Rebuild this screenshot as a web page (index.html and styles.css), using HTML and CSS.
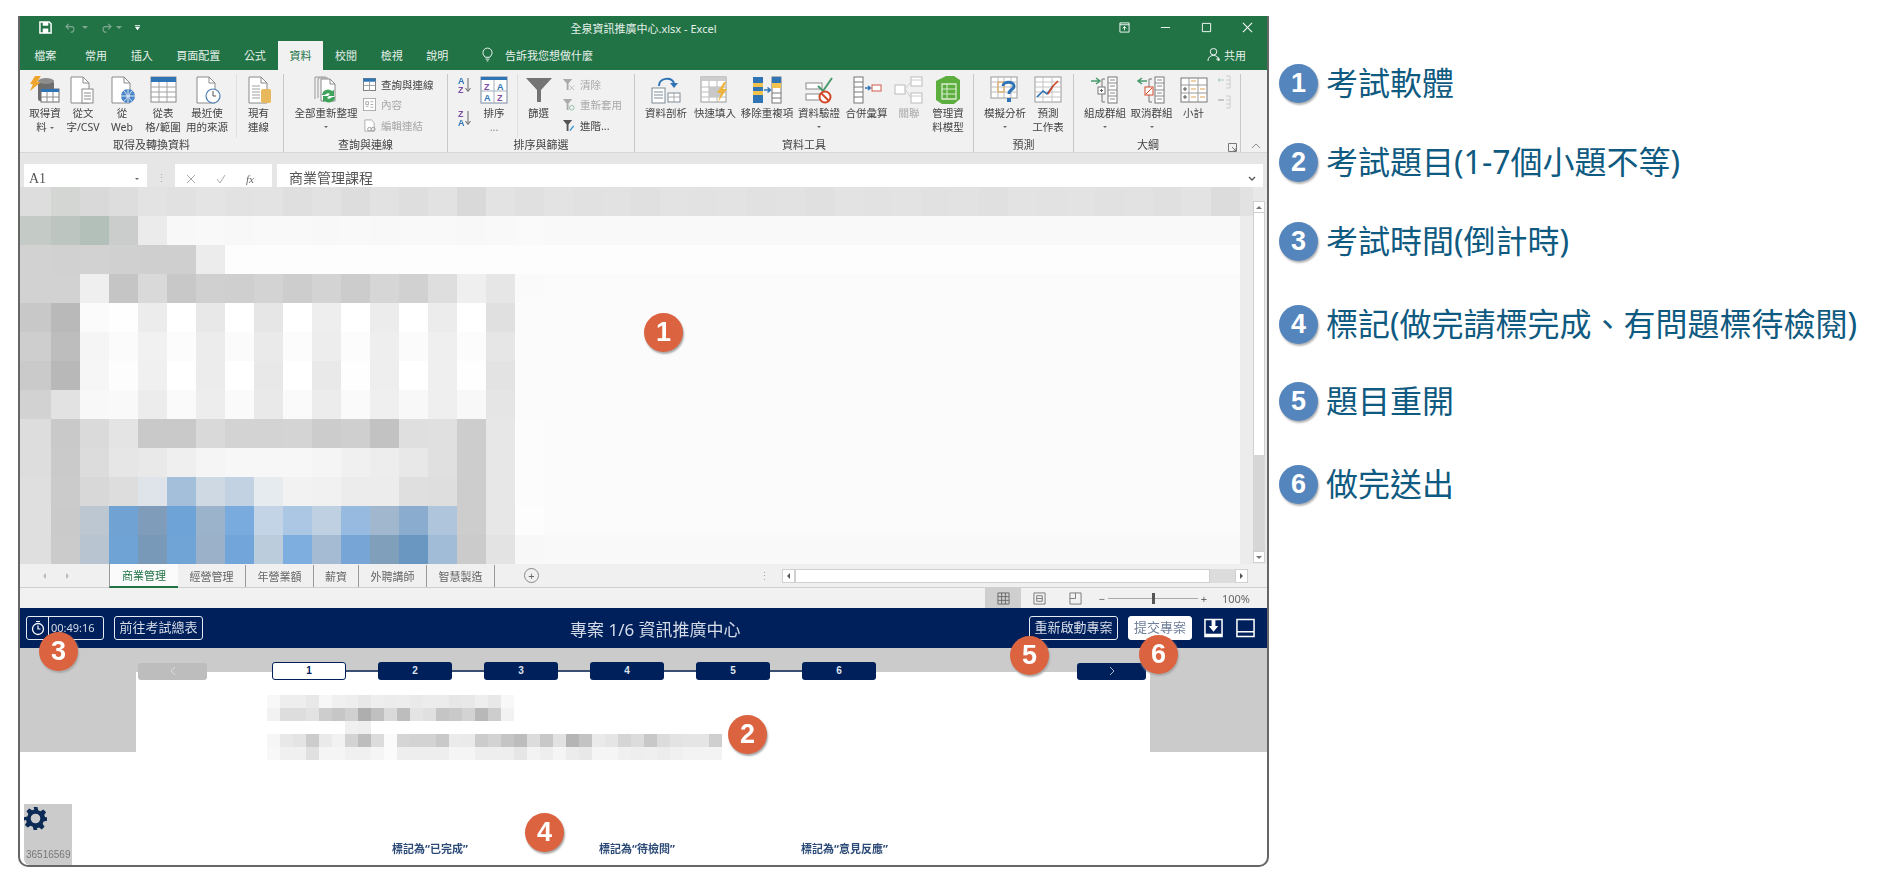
FILE: index.html

```html
<!DOCTYPE html>
<html lang="zh-Hant">
<head>
  <meta charset="UTF-8" />
  <meta name="viewport" content="width=device-width, initial-scale=1.0"/>
  <title>考試介面說明</title>
  <link rel="stylesheet" href="styles.css">
</head>
<body>
<div class="page">

  <div class="frame">

    <!-- excel window -->
    <div class="titlebar">
      <div class="qat">
        <svg class="q-save" viewBox="0 0 14 14"><path d="M1 1h10l2 2v10H1z" fill="none" stroke="#fff" stroke-width="1.6"/><path d="M4 1h6v4H4zM4 8h6v5H4z" fill="#fff"/></svg>
        <svg class="q-undo" viewBox="0 0 14 12"><path d="M4 2 1 5l3 3M1 5h7a3.500 3.500 0 0 1 0 6H6" fill="none" stroke="#7fa892" stroke-width="1.3"/></svg>
        <i class="q-caret"></i>
        <svg class="q-redo" viewBox="0 0 14 12"><path d="M10 2l3 3-3 3M13 5H6a3.500 3.500 0 0 0 0 6h2" fill="none" stroke="#7fa892" stroke-width="1.3"/></svg>
        <i class="q-caret"></i>
        <svg class="q-more" viewBox="0 0 8 8"><path d="M1 1h6v1H1zM1 3h6L4 7z" fill="#fff"/></svg>
      </div>
      <div class="doc-title">全泉資訊推廣中心.xlsx - Excel</div>
      <div class="winbtns">
        <svg viewBox="0 0 12 12"><path d="M1 1h10v10H1zM1 3h10" fill="none" stroke="#fff"/><path d="M6 9V5M4 7l2-2 2 2" fill="none" stroke="#fff"/></svg>
        <svg viewBox="0 0 12 12"><path d="M1 6h10" stroke="#fff"/></svg>
        <svg viewBox="0 0 12 12"><path d="M1.500 1.500h9v9h-9z" fill="none" stroke="#fff"/></svg>
        <svg viewBox="0 0 12 12"><path d="M1 1l10 10M11 1 1 11" stroke="#fff" stroke-width="1.100"/></svg>
      </div>
    </div>

    <div class="tabbar">
      <span class="tab tab-first">檔案</span>
      <span class="tab">常用</span>
      <span class="tab">插入</span>
      <span class="tab">頁面配置</span>
      <span class="tab">公式</span>
      <span class="tab active">資料</span>
      <span class="tab">校閱</span>
      <span class="tab">檢視</span>
      <span class="tab">說明</span>
      <svg class="bulb" viewBox="0 0 12 16"><path d="M3.500 11C2 9 1 8 1 6a5 5 0 0 1 10 0c0 2-1 3-2.500 5zM4 13h4M5 15h2" fill="none" stroke="#fff"/></svg>
      <span class="tell">告訴我您想做什麼</span>
      <span class="share">
        <svg viewBox="0 0 14 16"><circle cx="7" cy="5" r="3.500" fill="none" stroke="#fff"/><path d="M1 15c0-4 3-6 6-6s6 2 6 6M10 13h4M12 11v4" fill="none" stroke="#fff"/></svg>
        共用
      </span>
    </div>

    <div class="ribbon">

      <div class="group g1">
        <div class="items">
          <div class="item w38">
            <svg class="big" viewBox="0 0 30 28"><rect x="8" y="5" width="16" height="20" rx="2" fill="#6d6d6d"/><ellipse cx="16" cy="5" rx="8" ry="3" fill="#8d8d8d"/><rect x="11" y="13" width="18" height="13" fill="#fff" stroke="#6f6f6f"/><rect x="11" y="13" width="18" height="3" fill="#2f75b5"/><path d="M17 16v10M23 16v10M11 21h18" stroke="#8b8b8b"/><path d="M5 0h6L7 6h4L0 15l3-7H0z" fill="#efa42c"/></svg>
            <span>取得資<br>料<i class="caret in"></i></span>
          </div>
          <div class="item w38">
            <svg class="big" viewBox="0 0 30 28"><path d="M3 1h12l6 6v20H3z" fill="#fff" stroke="#8a8a8a"/><path d="M15 1v6h6" fill="none" stroke="#8a8a8a"/><rect x="14" y="13" width="11" height="14" fill="#fff" stroke="#8a8a8a"/><path d="M16 17h7M16 20h7M16 23h7" stroke="#8a8a8a"/></svg>
            <span>從文<br>字/CSV</span>
          </div>
          <div class="item w40">
            <svg class="big" viewBox="0 0 30 28"><path d="M5 1h12l6 6v20H5z" fill="#fff" stroke="#8a8a8a"/><path d="M17 1v6h6" fill="none" stroke="#8a8a8a"/><circle cx="21" cy="20" r="7" fill="#4a86c8"/><path d="M14 20h14M21 13v14M17 15c3 3 5 7 0 10M25 15c-3 3-5 7 0 10" fill="none" stroke="#fff" stroke-width=".8"/></svg>
            <span>從<br>Web</span>
          </div>
          <div class="item w42">
            <svg class="big" viewBox="0 0 30 28"><rect x="3" y="1" width="25" height="25" fill="#fff" stroke="#8a8a8a"/><rect x="3" y="1" width="25" height="5" fill="#2f75b5"/><path d="M3 11h25M3 16h25M3 21h25M11 6v20M19 6v20" stroke="#a0a0a0"/></svg>
            <span>從表<br>格/範圍</span>
          </div>
          <div class="item w46">
            <svg class="big" viewBox="0 0 30 28"><path d="M5 1h12l6 6v20H5z" fill="#fff" stroke="#8a8a8a"/><path d="M17 1v6h6" fill="none" stroke="#8a8a8a"/><circle cx="21" cy="20" r="7" fill="#fff" stroke="#4a7fb5" stroke-width="1.200"/><path d="M21 15v5h3" fill="none" stroke="#555"/></svg>
            <span>最近使<br>用的來源</span>
          </div>
          <div class="item w44 sep">
            <svg class="big" viewBox="0 0 30 28"><path d="M5 1h12l6 6v20H5z" fill="#fff" stroke="#8a8a8a"/><path d="M17 1v6h6" fill="none" stroke="#8a8a8a"/><path d="M8 10h8M8 13h8M8 16h8M8 19h8M8 22h8" stroke="#a0a0a0"/><rect x="17" y="13" width="10" height="14" rx="2" fill="#e9b85c"/></svg>
            <span>現有<br>連線</span>
          </div>
        </div>
        <div class="group-label">取得及轉換資料</div>
      </div>

      <div class="group g2">
        <div class="items">
          <div class="item w64">
            <svg class="big" viewBox="0 0 30 28"><path d="M4 1v22M7 2v20M4 1h11M7 2h10" fill="none" stroke="#999"/><path d="M10 3h9l5 5v17H10z" fill="#fff" stroke="#8a8a8a"/><path d="M19 3v5h5" fill="none" stroke="#8a8a8a"/><path d="M11 19a6 6 0 0 1 10-4l2-1v6h-6l2-2a3.500 3.500 0 0 0-5 1zM24 21a6 6 0 0 1-10 4l-2 1v-6h6l-2 2a3.500 3.500 0 0 0 5-1z" fill="#3fa35c"/></svg>
            <span>全部重新整理</span>
            <i class="caret"></i>
          </div>
          <div class="smalls s2">
            <div class="small">
              <svg viewBox="0 0 14 14"><rect x=".5" y=".5" width="13" height="13" fill="#fff" stroke="#777"/><rect x=".5" y=".5" width="13" height="3.500" fill="#2f75b5"/><path d="M.5 8h13M7 4v10" stroke="#999"/></svg>
              <span>查詢與連線</span>
            </div>
            <div class="small off">
              <svg viewBox="0 0 14 14"><rect x=".5" y=".5" width="13" height="13" fill="#fff" stroke="#aaa"/><path d="M3 4h3v3H3zM3 9h3M8 4h3M8 7h3M8 10h3" fill="none" stroke="#aaa"/></svg>
              <span>內容</span>
            </div>
            <div class="small off">
              <svg viewBox="0 0 14 14"><path d="M2 1h7l3 3v9H2z" fill="#fff" stroke="#aaa"/><circle cx="7" cy="11" r="2" fill="none" stroke="#999"/><circle cx="11" cy="11" r="2" fill="none" stroke="#999"/></svg>
              <span>編輯連結</span>
            </div>
          </div>
        </div>
        <div class="group-label">查詢與連線</div>
      </div>

      <div class="group g3">
        <div class="items">
          <div class="sorts">
            <svg viewBox="0 0 18 20"><text x="0" y="9" class="az a">A</text><text x="0" y="18" class="az z">Z</text><path d="M10 3v13M7.500 13l2.500 3.500 2.500-3.500" fill="none" stroke="#666"/></svg>
            <svg viewBox="0 0 18 20"><text x="0" y="9" class="az z">Z</text><text x="0" y="18" class="az a">A</text><path d="M10 3v13M7.500 13l2.500 3.500 2.500-3.500" fill="none" stroke="#666"/></svg>
          </div>
          <div class="item w36">
            <svg class="big" viewBox="0 0 30 28"><rect x="2" y="1" width="26" height="26" fill="#fff" stroke="#7b8ca0"/><rect x="2" y="1" width="26" height="3" fill="#2f75b5"/><path d="M15 4v23M2 15h26" stroke="#a4afbc"/><text x="5" y="14" class="az z">Z</text><text x="18" y="14" class="az a">A</text><text x="5" y="25" class="az a">A</text><text x="18" y="25" class="az z">Z</text></svg>
            <span>排序<br><b class="dots">...</b></span>
          </div>
          <div class="item w42 sep-s">
            <svg class="big" viewBox="0 0 30 28"><path d="M2 2h26L17 14v12h-4V14z" fill="#747474"/></svg>
            <span>篩選</span>
          </div>
          <div class="smalls s3">
            <div class="small off">
              <svg viewBox="0 0 14 14"><path d="M1 1h10L7 6v7H5V6z" fill="#aaa"/><path d="M8 8l5 5M13 8l-5 5" stroke="#bbb"/></svg>
              <span>清除</span>
            </div>
            <div class="small off">
              <svg viewBox="0 0 14 14"><path d="M1 1h10L7 6v7H5V6z" fill="#aaa"/><circle cx="10.500" cy="10.500" r="2.500" fill="none" stroke="#8fc0a4"/></svg>
              <span>重新套用</span>
            </div>
            <div class="small">
              <svg viewBox="0 0 14 14"><path d="M1 1h10L7 6v7H5V6z" fill="#555"/><path d="M8 12l4-5 1 1-4 5z" fill="#2f8fd0"/></svg>
              <span>進階...</span>
            </div>
          </div>
        </div>
        <div class="group-label">排序與篩選</div>
      </div>

      <div class="group g4">
        <div class="items">
          <div class="item w48">
            <svg class="big" viewBox="0 0 30 28"><rect x="1" y="12" width="13" height="15" fill="#fff" stroke="#7e8b98"/><path d="M3 16h9M3 19h9M3 22h9" stroke="#7e8b98"/><rect x="17" y="17" width="12" height="9" fill="#fff" stroke="#7e8b98"/><path d="M17 21h12M23 17v9" stroke="#aaa"/><path d="M8 10C8 2 20 0 23 7" fill="none" stroke="#2f75b5" stroke-width="2"/><path d="M19 7h8l-4 5z" fill="#2f75b5"/></svg>
            <span>資料剖析</span>
          </div>
          <div class="item w50">
            <svg class="big" viewBox="0 0 30 28"><rect x="1" y="1" width="25" height="25" fill="#fff" stroke="#999"/><rect x="1" y="1" width="25" height="4" fill="#ccc"/><path d="M1 11h25M1 16h25M1 21h25M9 5v21M17 5v21" stroke="#bbb"/><rect x="9" y="11" width="13" height="10" fill="#c8c8c8"/><path d="M24 6l-7 11h4l-3 9 9-13h-4l3-7z" fill="#efb43c"/></svg>
            <span>快速填入</span>
          </div>
          <div class="item w54">
            <svg class="big" viewBox="0 0 30 28"><rect x="1" y="1" width="10" height="26" fill="#2f75b5"/><rect x="1" y="7" width="10" height="4" fill="#f2c14e"/><rect x="1" y="15" width="10" height="4" fill="#f2c14e"/><rect x="20" y="1" width="9" height="26" fill="#fff" stroke="#777"/><rect x="20" y="1" width="9" height="6" fill="#2f75b5"/><rect x="20" y="7" width="9" height="5" fill="#f2c14e"/><path d="M20 17h9M20 22h9" stroke="#777"/><path d="M12 14h6M15.500 11.500l3 2.500-3 2.500" fill="none" stroke="#2f75b5" stroke-width="1.500"/></svg>
            <span>移除重複項</span>
          </div>
          <div class="item w50">
            <svg class="big" viewBox="0 0 30 28"><rect x="2" y="7" width="16" height="6" fill="#fff" stroke="#8a8a8a"/><rect x="2" y="18" width="16" height="6" fill="#fff" stroke="#8a8a8a"/><path d="M14 10l5 5L28 2" fill="none" stroke="#4a9a6f" stroke-width="2"/><circle cx="21" cy="21" r="5.500" fill="#fff" stroke="#d2492a" stroke-width="2"/><path d="M17.500 17.500l7 7" stroke="#d2492a" stroke-width="2"/></svg>
            <span>資料驗證</span>
            <i class="caret"></i>
          </div>
          <div class="item w45">
            <svg class="big" viewBox="0 0 30 28"><rect x="2" y="1" width="9" height="26" fill="#fff" stroke="#777"/><path d="M2 6h9M2 11h9M2 16h9M2 21h9" stroke="#777"/><path d="M13 12h5M16 10l2.500 2-2.500 2" fill="none" stroke="#2f75b5" stroke-width="1.400"/><rect x="20" y="9" width="9" height="6" fill="#fff" stroke="#d05a4a"/></svg>
            <span>合併彙算</span>
          </div>
          <div class="item w40 off">
            <svg class="big" viewBox="0 0 30 28"><rect x="1" y="9" width="10" height="9" fill="#fff" stroke="#bbb"/><rect x="17" y="1" width="11" height="9" fill="#fff" stroke="#bbb"/><rect x="17" y="17" width="11" height="10" fill="#fff" stroke="#bbb"/><path d="M11 13l6-7M11 13l6 9M17 4h11M17 20h11" stroke="#ccc" fill="none"/></svg>
            <span>關聯</span>
          </div>
          <div class="item w38">
            <svg class="big" viewBox="0 0 30 28"><path d="M3 5 13 0h8l6 4v19l-6 5H9l-6-4z" fill="#5cae3f"/><path d="M9 8h14v15H9z" fill="none" stroke="#d9edcf" stroke-width="1.300"/><path d="M14 8v15M9 13h14M9 18h14" stroke="#d9edcf"/></svg>
            <span>管理資<br>料模型</span>
          </div>
        </div>
        <div class="group-label">資料工具</div>
      </div>

      <div class="group g5">
        <div class="items">
          <div class="item w44">
            <svg class="big" viewBox="0 0 30 28"><rect x="1" y="1" width="26" height="21" fill="#fff" stroke="#999"/><path d="M1 6h26M1 11h26M1 16h26M8 1v21M14 1v21M21 1v21" stroke="#bbb"/><path d="M8 6h6v10H8z" fill="none" stroke="#e6a24e"/><path d="M13 10c0-5 11-5 11 0 0 4-5 3-5 8" fill="none" stroke="#2f75b5" stroke-width="3"/><rect x="17" y="22" width="4" height="4" fill="#2f75b5"/></svg>
            <span>模擬分析</span>
            <i class="caret"></i>
          </div>
          <div class="item w42">
            <svg class="big" viewBox="0 0 30 28"><rect x="2" y="1" width="26" height="25" fill="#fff" stroke="#999"/><path d="M2 6h26M2 11h26M2 16h26M2 21h26M10 1v25M19 1v25" stroke="#c4c4c4"/><path d="M4 21l6-6 4 3 6-8" fill="none" stroke="#2f75b5" stroke-width="1.600"/><path d="M15 18l5-8 5-5" fill="none" stroke="#d2492a" stroke-width="1.600"/></svg>
            <span>預測<br>工作表</span>
          </div>
        </div>
        <div class="group-label">預測</div>
      </div>

      <div class="group g6">
        <div class="items">
          <div class="item w48">
            <svg class="big" viewBox="0 0 30 28"><path d="M1 5h8M6 2l4 3-4 3" fill="none" stroke="#4a9a6f" stroke-width="1.500"/><path d="M15 3h-3v23h3" fill="none" stroke="#777"/><rect x="8" y="11" width="7" height="7" fill="#fff" stroke="#777"/><path d="M10 14.500h3M11.500 13v3" stroke="#555"/><rect x="18" y="1" width="9" height="26" fill="#fff" stroke="#777"/><path d="M18 7h9M18 14h9M18 20h9M20 4h5M20 10h5M20 17h5M20 23h5" stroke="#8a8a8a"/></svg>
            <span>組成群組</span>
            <i class="caret"></i>
          </div>
          <div class="item w45">
            <svg class="big" viewBox="0 0 30 28"><path d="M10 5H2M5 2 1 5l4 3" fill="none" stroke="#4a9a6f" stroke-width="1.500"/><path d="M15 3h-3v23h3" fill="none" stroke="#777"/><rect x="8" y="11" width="8" height="8" fill="#fff" stroke="#d2492a"/><path d="M9 18l6-6" stroke="#d2492a"/><rect x="18" y="1" width="9" height="26" fill="#fff" stroke="#777"/><path d="M18 7h9M18 14h9M18 20h9M20 4h5M20 10h5M20 17h5M20 23h5" stroke="#8a8a8a"/></svg>
            <span>取消群組</span>
            <i class="caret"></i>
          </div>
          <div class="item w39">
            <svg class="big" viewBox="0 0 30 28"><rect x="2" y="2" width="26" height="24" fill="#fff" stroke="#777"/><path d="M2 9h26M2 17h26M10 2v24M19 2v24" stroke="#999"/><path d="M4 13h4M6 11v4M4 21h4M6 19v4" stroke="#555"/><path d="M12 5h5M12 13h5M21 13h5M12 21h5M21 21h5" stroke="#e0a050"/></svg>
            <span>小計</span>
          </div>
          <div class="outline-mini">
            <svg viewBox="0 0 14 14"><path d="M1 5h6M3 3 1 5l2 2" fill="none" stroke="#a8cdb8"/><path d="M9 1h4v12H9M9 5h4M9 9h4" fill="none" stroke="#ccc"/></svg>
            <svg viewBox="0 0 14 14"><path d="M1 5h6" stroke="#999"/><path d="M9 1h4v12H9M9 5h4M9 9h4" fill="none" stroke="#ccc"/></svg>
          </div>
        </div>
        <div class="group-label">大綱</div>
        <svg class="launcher" viewBox="0 0 9 9"><path d="M.5.5h8v8h-8zM4 4l4 4M8 5v3H5" fill="none" stroke="#777"/></svg>
      </div>

      <svg class="collapse" viewBox="0 0 12 7"><path d="M1 6l5-5 5 5" fill="none" stroke="#777"/></svg>
    </div>

    <div class="formula">
      <div class="namebox"><span>A1</span><i class="caret"></i></div>
      <div class="fdots">⋮</div>
      <div class="fxbox">
        <svg viewBox="0 0 10 10"><path d="M1 1l8 8M9 1 1 9" stroke="#aaa"/></svg>
        <svg viewBox="0 0 10 10"><path d="M1 5l3 4 5-8" fill="none" stroke="#aaa"/></svg>
        <em>fx</em>
      </div>
      <div class="finput"><span>商業管理課程</span><svg viewBox="0 0 8 5"><path d="M1 1l3 3 3-3" fill="none" stroke="#555" stroke-width="1.300"/></svg></div>
    </div>

    <div class="sheet">
      <div class="mosaic" id="mosaic"></div>
      <div class="vscroll">
        <div class="sb-btn"><i class="up"></i></div>
        <div class="sb-thumb"></div>
        <div class="sb-track"></div>
        <div class="sb-btn"><i class="down"></i></div>
      </div>
    </div>

    <div class="sheetbar">
      <div class="navs"><i class="nav-l"></i><i class="nav-r"></i></div>
      <span class="stab current w69">商業管理</span>
      <span class="stab w68">經營管理</span>
      <span class="stab w68">年營業額</span>
      <span class="stab w45t">薪資</span>
      <span class="stab w68">外聘講師</span>
      <span class="stab w68">智慧製造</span>
      <span class="addsheet">+</span>
      <div class="hscroll">
        <span class="hdots">⋮</span>
        <div class="h-btn"><i class="nav-l dark"></i></div>
        <div class="h-thumb"></div>
        <div class="h-track"></div>
        <div class="h-btn"><i class="nav-r dark"></i></div>
      </div>
    </div>

    <div class="statusbar">
      <div class="view on"><svg viewBox="0 0 14 14"><path d="M1 1h12v12H1zM1 5h12M1 9h12M5 1v12M9 1v12" fill="none" stroke="#666"/></svg></div>
      <div class="view"><svg viewBox="0 0 14 14"><path d="M1 1h12v12H1zM4 4h6v6H4zM4 7h6" fill="none" stroke="#777"/></svg></div>
      <div class="view"><svg viewBox="0 0 14 14"><path d="M1 1h12v12H1zM7 1v6H1" fill="none" stroke="#777"/></svg></div>
      <div class="zoom">
        <span>−</span>
        <div class="slider"><i></i></div>
        <span>+</span>
      </div>
      <span class="pct">100%</span>
    </div>

    <!-- exam panel -->
    <div class="exam-head">
      <div class="timer">
        <span class="clock"><svg viewBox="0 0 14 16"><circle cx="7" cy="9" r="5.500" fill="none" stroke="#fff" stroke-width="1.300"/><path d="M7 5.500V9h2.500M5 1.500h4" fill="none" stroke="#fff" stroke-width="1.200"/></svg></span>
        <span class="time">00:49:16</span>
      </div>
      <div class="hbtn summary">前往考試總表</div>
      <div class="exam-title">專案 1/6 資訊推廣中心</div>
      <div class="head-right">
        <div class="hbtn restart">重新啟動專案</div>
        <div class="hbtn submit">提交專案</div>
        <svg class="hicon" viewBox="0 0 20 20"><path d="M1 1h18v18H1z" fill="none" stroke="#fff" stroke-width="1.600"/><path d="M8 1h4v7h3l-5 6-5-6h3z" fill="#fff"/><path d="M1 16h18v3H1z" fill="#fff"/></svg>
        <svg class="hicon" viewBox="0 0 20 20"><path d="M1 1h18v18H1zM1 14h18" fill="none" stroke="#fff" stroke-width="1.600"/></svg>
      </div>
    </div>

    <div class="stage">
      <div class="side"></div>
      <div class="question">
        <div class="steps">
          <div class="arrow prev"><svg viewBox="0 0 6 10"><path d="M5 1 1 5l4 4" fill="none" stroke="#ddd"/></svg></div>
          <div class="step first">1</div>
          <i class="link"></i>
          <div class="step">2</div>
          <i class="link"></i>
          <div class="step">3</div>
          <i class="link"></i>
          <div class="step">4</div>
          <i class="link"></i>
          <div class="step">5</div>
          <i class="link"></i>
          <div class="step">6</div>
          <div class="arrow next"><svg viewBox="0 0 6 10"><path d="M1 1l4 4-4 4" fill="none" stroke="#aab6ca"/></svg></div>
        </div>
        <div class="blurred" id="blurred"></div>
      </div>
      <div class="side"></div>
    </div>

    <div class="foot">
      <div class="gearbox">
        <svg viewBox="0 0 24 24"><path d="M10 0h4l.8 3.500 2.400 1 3-1.900 2.800 2.800-1.900 3 1 2.400L24 10.600v3.800l-3.500.8-1 2.400 1.900 3-2.800 2.800-3-1.900-2.400 1L14 24h-4l-.8-3.400-2.400-1-3 1.900-2.800-2.800 1.900-3-1-2.400L0 14.400v-3.800l3.500-.8 1-2.400-1.900-3 2.800-2.800 3 1.900 2.400-1zM12 7a5 5 0 1 0 0 10 5 5 0 0 0 0-10z" fill="#0b2a55" fill-rule="evenodd"/></svg>
        <span>36516569</span>
      </div>
      <div class="marks">
        <span>標記為“已完成”</span>
        <span>標記為“待檢閱”</span>
        <span>標記為“意見反應”</span>
      </div>
    </div>
  </div>

  <!-- numbered legend -->
  <ol class="legend">
    <li><b>1</b><span>考試軟體</span></li>
    <li><b>2</b><span>考試題目(1-7個小題不等)</span></li>
    <li><b>3</b><span>考試時間(倒計時)</span></li>
    <li><b>4</b><span>標記(做完請標完成、有問題標待檢閱)</span></li>
    <li><b>5</b><span>題目重開</span></li>
    <li><b>6</b><span>做完送出</span></li>
  </ol>

  <span class="badge b1">1</span>
  <span class="badge b2">2</span>
  <span class="badge b3">3</span>
  <span class="badge b4">4</span>
  <span class="badge b5">5</span>
  <span class="badge b6">6</span>
</div>
<script src="mosaic.js"></script>
</body>
</html>
```

FILE: styles.css

```css
* {
  box-sizing: border-box;
}
html, body {
  margin: 0;
  height: 100%;
  overflow: hidden;
  background: #fff;
}
body {
  font-family: "Noto Sans", "Noto Sans CJK TC", sans-serif;
  font-size: 11px;
  color: #444;
}
svg {
  display: block;
}
.page {
  position: relative;
  display: flex;
  align-items: flex-start;
  width: 1884px;
  height: 886px;
  padding: 16px 0 0 18px;
}
.frame {
  flex: none;
  width: 1251px;
  height: 851px;
  border: 2px solid #666;
  border-top: 0;
  border-radius: 0 0 10px 10px;
  filter: blur(.35px);
}

/* title + tabs */
.titlebar {
  display: grid;
  grid-template-columns: 1fr auto 1fr;
  align-items: center;
  height: 25px;
  padding-bottom: 2px;
  background: #217346;
  color: #e6f0ea;
}
.qat {
  display: flex;
  align-items: center;
  padding-left: 19px;
}
.q-save {
  width: 13px;
  height: 13px;
}
.q-undo, .q-redo {
  width: 13px;
  height: 11px;
}
.q-undo {
  margin-left: 13px;
}
.q-redo {
  margin-left: 11px;
}
.q-caret {
  width: 0;
  height: 0;
  margin-left: 4px;
  border: 3px solid transparent;
  border-top-color: #7fa892;
  border-bottom: 0;
}
.q-more {
  width: 7px;
  height: 7px;
  margin-left: 12px;
}
.doc-title {
  font-size: 11px;
  white-space: nowrap;
}
.winbtns {
  display: flex;
  justify-content: flex-end;
  align-items: center;
  gap: 30px;
  padding-right: 14px;
}
.winbtns svg {
  width: 11px;
  height: 11px;
}
.tabbar {
  display: flex;
  align-items: center;
  height: 29px;
  padding-left: 2.500px;
  background: #217346;
  color: #e6f0ea;
}
.tab {
  display: flex;
  align-items: center;
  height: 100%;
  padding: 0 11.800px 2px;
  white-space: nowrap;
}
.tab-first {
  padding-right: 17px;
}
.tab.active {
  background: #f1f1f1;
  color: #217346;
}
.bulb {
  width: 11px;
  height: 15px;
  margin: 0 0 2px 22px;
}
.tell {
  margin: 0 0 2px 12px;
}
.share {
  display: flex;
  align-items: center;
  gap: 4px;
  margin: 0 0 2px auto;
  padding-right: 21px;
}
.share svg {
  width: 13px;
  height: 15px;
}

/* ribbon */
.ribbon {
  position: relative;
  display: flex;
  height: 83px;
  padding-top: 4px;
  background: #f1f1f1;
  border-bottom: 1px solid #d6d6d6;
}
.group {
  position: relative;
  display: flex;
  flex-direction: column;
  flex: none;
  height: 78px;
  border-right: 1px solid #c8c8c8;
}
.g1 { width: 264px; padding-left: 6px; }
.g2 { width: 164px; padding-left: 10px; }
.g3 { width: 187px; padding-left: 10px; }
.g4 { width: 339px; padding-left: 7px; }
.g5 { width: 100px; padding-left: 9px; }
.g6 { width: 167px; padding-left: 7px; }
.items {
  display: flex;
  height: 65px;
}
.group-label {
  margin-left: -10px;
  height: 14px;
  line-height: 14px;
  text-align: center;
  font-size: 11px;
}
.g1 .group-label { margin-left: -6px; }
.g4 .group-label { margin-left: -7px; }
.g5 .group-label { margin-left: -9px; }
.g6 .group-label { margin-left: -7px; padding-right: 18px; }
.item {
  display: flex;
  flex-direction: column;
  align-items: center;
  flex: none;
  padding-top: 2px;
  line-height: 14px;
  font-size: 10.500px;
  text-align: center;
  white-space: nowrap;
}
.item .big {
  width: 30px;
  height: 28px;
  margin-bottom: 2px;
}
.off, .off span {
  color: #a8a8a8;
}
.w36 { width: 36px; }
.w38 { width: 38px; }
.w39 { width: 39px; }
.w40 { width: 40px; }
.w42 { width: 42px; }
.w44 { width: 44px; }
.w45 { width: 45px; }
.w46 { width: 46px; }
.w48 { width: 48px; }
.w50 { width: 50px; }
.w54 { width: 54px; }
.w64 { width: 64px; }
.sep {
  margin-left: 6px;
  border-left: 1px solid #e0e0e0;
}
.sep-s {
  margin-left: 5px;
  border-left: 1px solid #e0e0e0;
}
.caret {
  display: block;
  width: 0;
  height: 0;
  margin: 6px auto 0;
  border: 2.500px solid transparent;
  border-top-color: #666;
  border-bottom: 0;
}
.caret.in {
  display: inline-block;
  margin: 0 0 2px 3px;
}
.smalls {
  display: flex;
  flex-direction: column;
}
.s2 { margin-left: 5px; }
.s3 { margin-left: 3px; }
.small {
  display: flex;
  align-items: center;
  gap: 5px;
  height: 20.500px;
  white-space: nowrap;
  font-size: 10.500px;
}
.small svg {
  width: 13px;
  height: 13px;
}
.sorts {
  display: flex;
  flex-direction: column;
  gap: 13px;
  padding-top: 1px;
}
.sorts svg {
  width: 18px;
  height: 20px;
}
.az {
  font: bold 9px "Liberation Sans", sans-serif;
}
.az.a { fill: #2f75b5; }
.az.z { fill: #7d4fa8; }
.dots {
  font-weight: normal;
  color: #888;
}
.outline-mini {
  display: flex;
  flex-direction: column;
  gap: 6px;
  padding: 1px 0 0 4px;
}
.outline-mini svg {
  width: 14px;
  height: 14px;
}
.launcher {
  position: absolute;
  right: 3px;
  bottom: 0;
  width: 9px;
  height: 9px;
}
.collapse {
  position: absolute;
  right: 6px;
  bottom: 3px;
  width: 10px;
  height: 6px;
}

/* formula bar */
.formula {
  display: flex;
  height: 34px;
  padding-top: 11px;
  background: #e6e6e6;
  overflow: hidden;
}
.namebox {
  display: flex;
  align-items: center;
  justify-content: space-between;
  width: 123px;
  height: 23px;
  margin-left: 4px;
  padding: 6px 8px 0 5px;
  background: #fff;
  font: 14px "Liberation Serif", serif;
  color: #555;
}
.namebox .caret {
  margin: 0;
}
.fdots {
  width: 28px;
  text-align: center;
  color: #aaa;
  line-height: 28px;
}
.fxbox {
  display: flex;
  align-items: center;
  gap: 20px;
  width: 97px;
  height: 23px;
  padding: 6px 0 0 11px;
  background: #fff;
}
.fxbox svg {
  width: 10px;
  height: 10px;
}
.fxbox em {
  font: italic 11px "Liberation Serif", serif;
  color: #666;
}
.finput {
  display: flex;
  align-items: center;
  justify-content: space-between;
  width: 986px;
  height: 23px;
  margin-left: 5px;
  padding: 5px 7px 0 12px;
  background: #fff;
  font-size: 14px;
  line-height: 18px;
  color: #555;
}
.finput svg {
  width: 8px;
  height: 5px;
}

/* blurred sheet */
.sheet {
  display: flex;
  height: 377px;
}
.mosaic {
  display: grid;
  grid-template-columns: 31px repeat(41, 29px) 13px;
  grid-auto-rows: 29px;
  width: 1233px;
}
.mosaic i, .blurred i {
  display: block;
}
.vscroll {
  display: flex;
  flex-direction: column;
  width: 14px;
  padding: 14px 2px 1px 0;
  background: #e8e8e8;
}
.sb-btn {
  display: flex;
  align-items: center;
  justify-content: center;
  height: 12px;
  background: #fff;
  border: 1px solid #d0d0d0;
}
.up, .down {
  width: 0;
  height: 0;
  border: 3.500px solid transparent;
}
.up {
  border-bottom-color: #777;
  border-top: 0;
}
.down {
  border-top-color: #777;
  border-bottom: 0;
}
.sb-thumb {
  height: 242px;
  background: #fff;
  border-left: 1px solid #d0d0d0;
  border-right: 1px solid #d0d0d0;
}
.sb-track {
  flex: 1;
  background: #d6d6d6;
}

/* sheet tabs */
.sheetbar {
  display: flex;
  align-items: center;
  height: 24px;
  background: #f0f0f0;
  border-bottom: 1px solid #cfcfcf;
}
.navs {
  display: flex;
  align-items: center;
  gap: 20px;
  width: 89px;
  padding-left: 23px;
}
.nav-l, .nav-r {
  width: 0;
  height: 0;
  border: 3.500px solid transparent;
}
.nav-l {
  border-right-color: #bbb;
  border-left: 0;
}
.nav-r {
  border-left-color: #bbb;
  border-right: 0;
}
.nav-l.dark { border-right-color: #555; }
.nav-r.dark { border-left-color: #555; }
.stab {
  display: flex;
  align-items: center;
  justify-content: center;
  height: 22px;
  border-right: 1px solid #999;
  color: #666;
}
.w69 { width: 69px; }
.w68 { width: 68px; }
.w45t { width: 45px; }
.stab.current {
  height: 24px;
  background: #fbfbfb;
  color: #217346;
  border-right: 0;
  border-left: 1px solid #999;
  border-bottom: 2px solid #217346;
}
.addsheet {
  display: flex;
  align-items: center;
  justify-content: center;
  width: 15px;
  height: 15px;
  margin-left: 29px;
  border: 1px solid #888;
  border-radius: 50%;
  line-height: 12px;
  color: #666;
}
.hscroll {
  display: flex;
  align-items: center;
  margin-left: auto;
  padding-right: 19px;
}
.hdots {
  margin-right: 12px;
  color: #aaa;
}
.h-btn {
  display: flex;
  align-items: center;
  justify-content: center;
  width: 13px;
  height: 14px;
  background: #fff;
  border: 1px solid #d0d0d0;
}
.h-thumb {
  width: 415px;
  height: 14px;
  background: #fff;
  border: 1px solid #d0d0d0;
}
.h-track {
  width: 25px;
  height: 14px;
  background: #dcdcdc;
}

/* status bar */
.statusbar {
  display: flex;
  justify-content: flex-end;
  align-items: center;
  height: 20px;
  padding-right: 17px;
  background: #f1f1f1;
}
.view {
  display: flex;
  align-items: center;
  justify-content: center;
  width: 36px;
  height: 100%;
}
.view.on {
  background: #cfcfcf;
}
.view svg {
  width: 13px;
  height: 13px;
}
.zoom {
  display: flex;
  align-items: center;
  gap: 3px;
  margin-left: 5px;
  color: #666;
}
.slider {
  position: relative;
  width: 90px;
  height: 1px;
  background: #aaa;
}
.slider i {
  position: absolute;
  left: 44px;
  top: -5px;
  width: 3px;
  height: 11px;
  background: #555;
}
.pct {
  margin-left: 15px;
  color: #666;
}

/* exam panel */
.exam-head {
  display: flex;
  align-items: center;
  height: 40px;
  padding: 0 12px 0 6px;
  background: #00205b;
}
.timer {
  display: flex;
  align-items: stretch;
  width: 78px;
  height: 24px;
  border: 1.500px solid #e6ebf3;
  border-radius: 3px;
}
.clock {
  display: flex;
  align-items: center;
  justify-content: center;
  width: 22px;
  border-right: 1.500px solid #e6ebf3;
}
.clock svg {
  width: 14px;
  height: 16px;
}
.time {
  margin-left: 2px;
  line-height: 21px;
  font-size: 11px;
  color: #d5dbe7;
}
.hbtn {
  flex: none;
  height: 24px;
  border: 1.500px solid #e6ebf3;
  border-radius: 3px;
  line-height: 20px;
  text-align: center;
  font-size: 13px;
  color: #d5dbe7;
}
.summary {
  width: 89px;
  margin-left: 10px;
}
.exam-title {
  margin-left: 367px;
  font-size: 17px;
  color: #d5dbe7;
  white-space: nowrap;
}
.head-right {
  display: flex;
  align-items: center;
  margin-left: auto;
}
.restart {
  width: 89px;
}
.submit {
  width: 64px;
  margin: 0 12px 0 10px;
  background: #fff;
  border-color: #fff;
  color: #6f7f99;
}
.hicon {
  width: 19px;
  height: 20px;
}
.hicon + .hicon {
  margin-left: 13px;
}
.stage {
  display: grid;
  grid-template-columns: 116px 1fr 117px;
  grid-template-rows: 104px;
  height: 104px;
}
.side {
  background: #cbcbcb;
}
.question {
  padding-top: 14px;
  background: linear-gradient(#cbcbcb 24px, #fff 24px);
}
.steps {
  display: flex;
  align-items: center;
  height: 18px;
  font: bold 10px "Liberation Sans", sans-serif;
}
.step {
  width: 74px;
  height: 18px;
  background: #00205b;
  border-radius: 3px;
  line-height: 18px;
  text-align: center;
  color: #dfe5ef;
}
.step.first {
  margin-left: 65px;
  background: #fff;
  border: 1.500px solid #00205b;
  line-height: 15px;
  color: #00205b;
}
.link {
  width: 32px;
  height: 2px;
  background: #3a5072;
}
.arrow {
  display: flex;
  align-items: center;
  justify-content: center;
  width: 69px;
  height: 17px;
  border-radius: 3px;
}
.arrow svg {
  width: 6px;
  height: 10px;
}
.prev {
  margin-left: 2px;
  background: #bdbdbd;
}
.next {
  margin-left: 201px;
  background: #00205b;
}
.blurred {
  display: grid;
  grid-template-columns: repeat(35, 13px);
  grid-auto-rows: 13px;
  margin: 15px 0 0 131px;
  width: 455px;
}
.foot {
  display: flex;
  align-items: flex-end;
  height: 113px;
}
.gearbox {
  width: 48px;
  height: 61px;
  margin-left: 4px;
  background: #cbcbcb;
  border-bottom-left-radius: 6px;
}
.gearbox svg {
  width: 23px;
  height: 23px;
  margin-top: 3px;
}
.gearbox span {
  display: block;
  margin: 19px 0 0 2px;
  font: 10px "Liberation Sans", sans-serif;
  color: #777;
}
.marks {
  display: grid;
  grid-template-columns: 207px 202px auto;
  margin: 0 0 9px 320px;
  font-size: 11px;
  font-weight: 700;
  line-height: 14px;
  color: #2c4a78;
}

/* legend on the right */
.legend {
  flex: none;
  margin: 47px 0 0 10px;
  padding: 0;
  list-style: none;
}
.legend li {
  display: flex;
  align-items: center;
  gap: 8px;
  height: 40px;
  margin-bottom: 39px;
  font-size: 32px;
  font-weight: 400;
  line-height: 40px;
  color: #0f5a80;
  white-space: nowrap;
}
.legend li:nth-child(3) { margin-bottom: 43px; }
.legend li:nth-child(4) { margin-bottom: 37px; }
.legend li:nth-child(5) { margin-bottom: 43px; }
.legend b {
  flex: none;
  width: 39px;
  height: 39px;
  border-radius: 50%;
  background: #5585bd;
  box-shadow: 1px 2px 2px #b5b5b5;
  font: bold 27px/39px "Liberation Sans", sans-serif;
  text-align: center;
  color: #fff;
}

/* numbered markers on the screenshot */
.badge {
  position: absolute;
  width: 39px;
  height: 39px;
  border-radius: 50%;
  background: #dc6340;
  box-shadow: 1px 2px 2px #a8a8a8;
  font: bold 27px/39px "Liberation Sans", sans-serif;
  text-align: center;
  color: #fff;
}
.b1 { left: 644px; top: 313px; }
.b2 { left: 728px; top: 715px; }
.b3 { left: 39px; top: 632px; }
.b4 { left: 525px; top: 813px; }
.b5 { left: 1010px; top: 636px; }
.b6 { left: 1139px; top: 635px; }
```

FILE: mosaic.js

```js
// blurred cells, two digits = grey, six digits = colour
const sheetRows = [
  "dd d4d6d3 d9 dd e3 e1 e4 e2 e3 df e2 dd e2 de e2 d9 e3 e0",
  "c4cbc6 bcc5c0 b3bfb9 cbcdcc eb f8 f9 f8 f9 f9 f8 f9 f8 f9 f9 f8 f9 fa",
  "d2 d1 d2 d0 cf cf ec fd fd fd fd fd fd fd fd fd fd fd",
  "d2 d2 ef c5 d9 c8 d0 cf d3 cd d3 cc d6 d1 de ef e6 fa",
  "c8 b9 fb fe ec ff e8 ff e6 ff ee ff ec ff ec ff e0 fb",
  "ce bd f5 fb f1 fc ec fb ea fc ed fc ee fb ef fc e6 fb",
  "ca b8 f6 fd f0 ff ec ff e8 ff e9 fe ee ff ef fe e3 fb",
  "d2 e2 f8 f9 ec fa ed fa e9 fa ec fa ef f8 ef f8 e5 fb",
  "dd c9 da e4 c9 c9 d9 d3 d3 d4 cc cf c2 df e0 cd e7 fc",
  "dd ca dc e6 e9 ef f5 f7 f7 f7 f5 f0 ed e8 e0 cd e7 fc",
  "df cb d8 dd dfe4ea a3bfd9 cfd9e4 c2d2e2 e6ebf0 f2 f1 ec ec df de cd e7 fc",
  "df ca bcc7d2 70a2d4 7f9cbb 6ea3d8 9cb3cc 7aabdf c2d4e6 abc7e3 bed0e1 97bbe0 a1b7ce 8aaccf aec5dc cd e7 fd",
  "df cb b8c4d0 70a3d5 7899b7 70a3d6 9ab1c9 72a5d9 bbccdd 7eaedf a5bbd3 76a5d6 809fbb 6a97c2 a0bcd6 cb e3 f8"
];

const blurRows = [
  "f8 ee ee e8 f7 f0 ee e8 ee ec ed ea ec ec e7 e8 ee e8 f8",
  "f2 dd dd e2 cd c6 d0 ae c0 da bd e4 e0 c5 c9 d3 b8 cd f2",
  "ff ff ff ff ff ff f0 ee",
  "f6 e8 e4 cc ea f2 d3 bd dc fb d5 d3 d3 c9 eb ea cc d3 c5 bd dc c8 e2 b5 c3 ea e5 d5 dc c8 dc e3 e5 e5 cf",
  "f8 f0 f0 e0 f5 f5 f0 f0 f5 fb ee ee ee ee f5 f5 ee ee ee e6 f3 ee f5 ec e8 f5 f5 f0 ee ef ec f0 f3 f3 f3"
];

function shade(v) {
  return v.length === 2 ? `#${v}${v}${v}` : `#${v}`;
}

function addCell(parent, color) {
  const cell = document.createElement("i");
  cell.style.background = color;
  parent.appendChild(cell);
}

const mosaic = document.getElementById("mosaic");
const topTail = ["e3", "e1", "e2", "e0", "e3", "e2"];
sheetRows.forEach((row, r) => {
  const cells = row.split(" ");
  for (let c = 0; c < 43; c++) {
    let v = cells[c];
    if (!v) {
      if (r === 0) v = c === 41 ? "dc" : c === 42 ? "e2" : topTail[c % 6];
      else if (c === 42) v = "ec";
      else if (r === 12) v = "f9";
      else if (r === 1) v = "f9";
      else v = r === 2 ? "fd" : "fb";
    }
    addCell(mosaic, shade(v));
  }
});

const blurred = document.getElementById("blurred");
blurRows.forEach((row) => {
  const cells = row.split(" ");
  for (let c = 0; c < 35; c++) {
    addCell(blurred, shade(cells[c] || "ff"));
  }
});
```
